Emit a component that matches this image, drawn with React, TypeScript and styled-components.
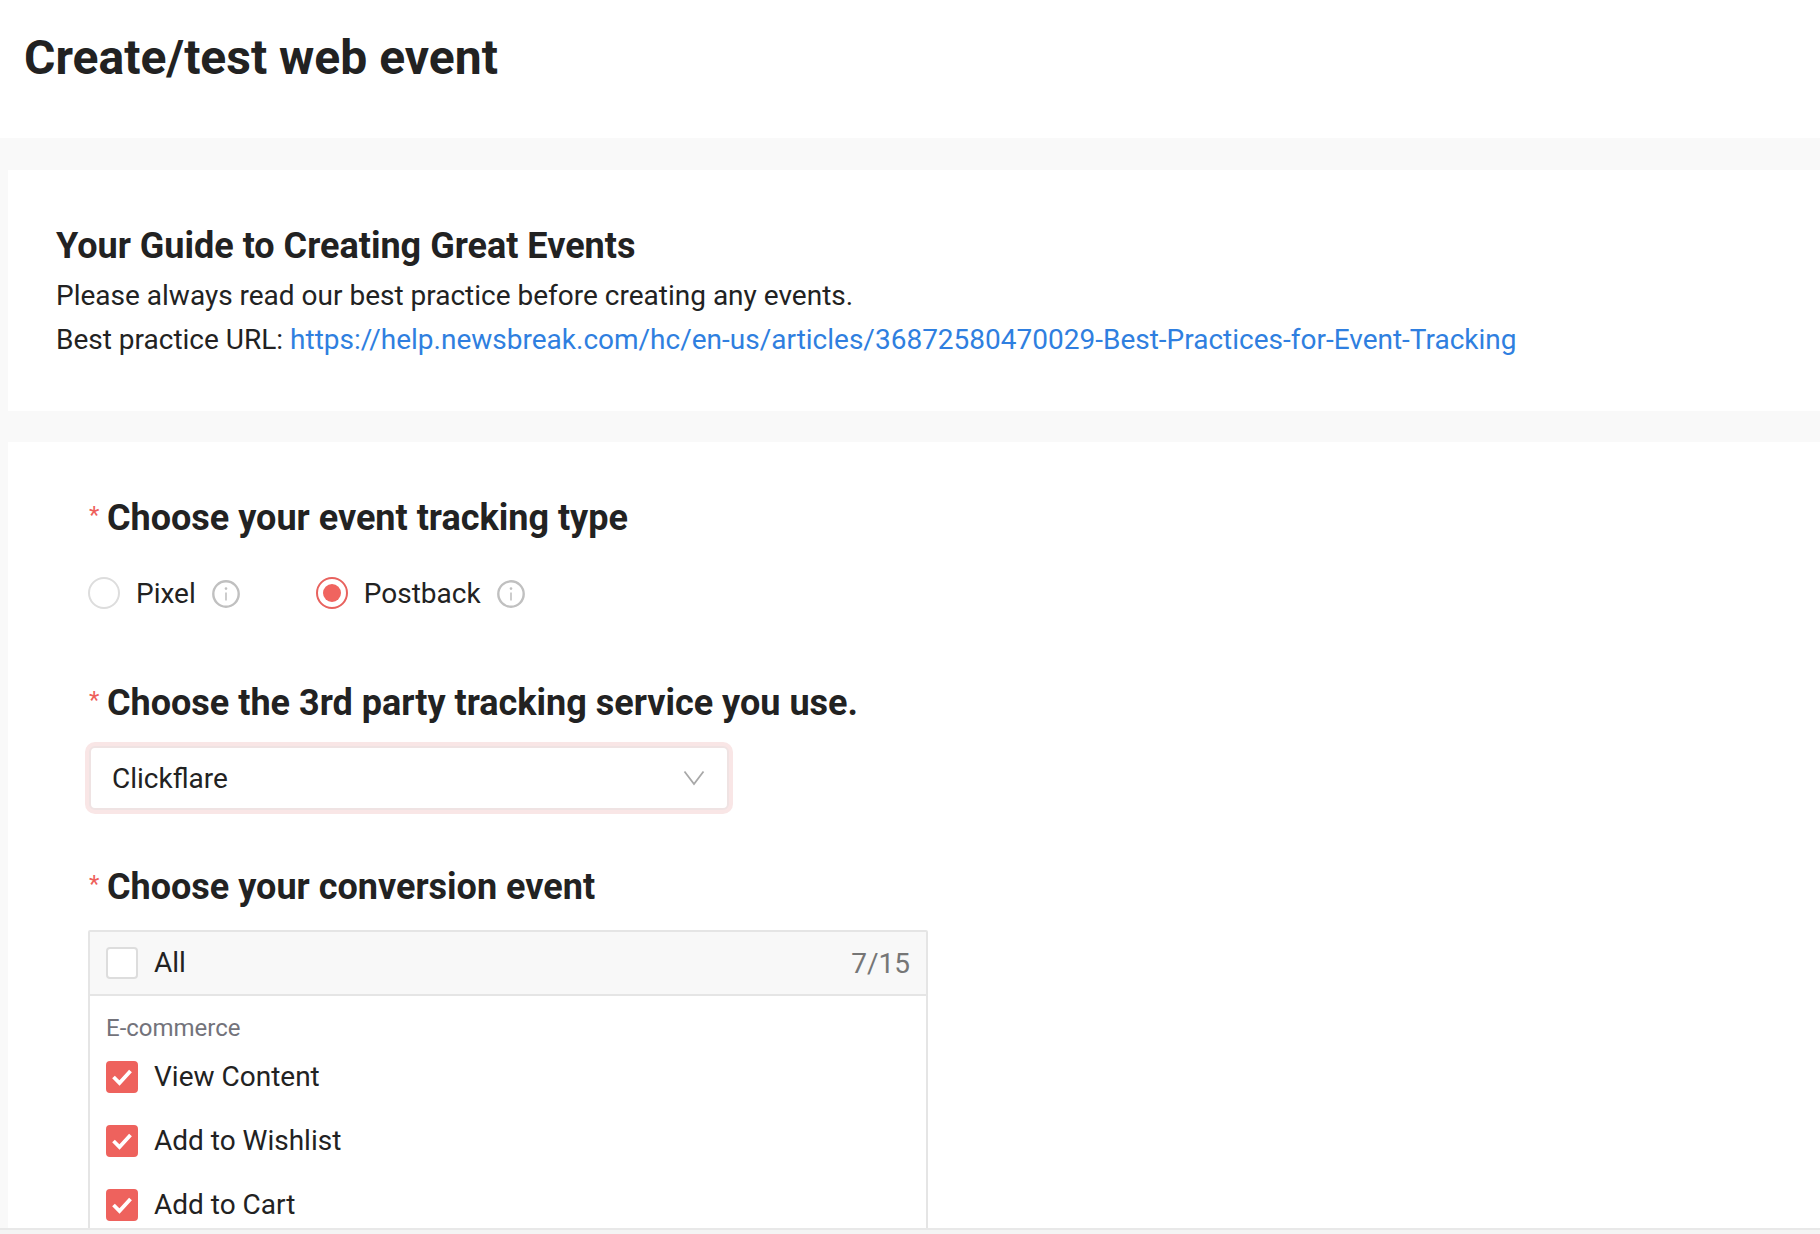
import React from 'react'
import styled, { createGlobalStyle } from 'styled-components'

const GlobalStyle = createGlobalStyle`
  html, body, #root { height: 100%; }
  body {
    margin: 0;
    background: #ffffff;
    color: #222222;
    font-family: Roboto, "Liberation Sans", sans-serif;
    overflow: hidden;
  }
  * { box-sizing: border-box; }
`

const Page = styled.div`
  height: 100vh;
  display: flex;
  flex-direction: column;
  overflow: hidden;
`

const Header = styled.header`
  height: 138px;
  flex: none;
  padding: 29px 0 0 24px;
  background: #ffffff;
`

const PageTitle = styled.h1`
  margin: 0;
  font-size: 48px;
  line-height: 58px;
  font-weight: 700;
  color: #222222;
`

const Content = styled.main`
  flex: 1;
  min-height: 0;
  padding: 32px 0 0 8px;
  background: #f9f9f9;
  display: flex;
  flex-direction: column;
  gap: 31px;
  overflow: hidden;
`

const GuideCard = styled.section`
  flex: none;
  height: 241px;
  padding: 57px 0 0 48px;
  background: #ffffff;
`

const GuideTitle = styled.h2`
  margin: 0 0 9px;
  font-size: 36px;
  line-height: 38px;
  font-weight: 700;
`

const GuideLine = styled.p`
  margin: 0;
  font-size: 28px;
  line-height: 44px;
  color: #222222;
`

const GuideLink = styled.a`
  color: #2f7fe0;
  text-decoration: none;
`

const FormCard = styled.section`
  flex: 1;
  min-height: 0;
  padding: 53px 0 0 80px;
  background: #ffffff;
  overflow: hidden;
`

const Field = styled.div<{ $gap: number; $after: number }>`
  display: flex;
  flex-direction: column;
  gap: ${p => p.$gap}px;
  margin-bottom: ${p => p.$after}px;
`

const Heading = styled.h3`
  position: relative;
  margin: 0;
  padding-left: 19px;
  font-size: 36px;
  line-height: 46px;
  font-weight: 700;
  color: #222222;

  &::before {
    content: '*';
    position: absolute;
    left: 1px;
    top: -3px;
    font-size: 24px;
    font-weight: 400;
    color: #ee5f5b;
  }
`

const RadioRow = styled.div`
  display: flex;
  height: 40px;
  align-items: center;
  gap: 76px;
`

const RadioOption = styled.label`
  display: flex;
  align-items: center;
  font-size: 28px;
`

const RadioMark = styled.span<{ $checked?: boolean }>`
  width: 32px;
  height: 32px;
  margin-right: 16px;
  border-radius: 50%;
  border: 2px solid ${p => (p.$checked ? '#e8625e' : '#dddddd')};
  display: flex;
  align-items: center;
  justify-content: center;

  &::after {
    content: '';
    display: ${p => (p.$checked ? 'block' : 'none')};
    width: 18px;
    height: 18px;
    border-radius: 50%;
    background: #f0645f;
  }
`

const InfoIcon = styled.svg`
  width: 28px;
  height: 28px;
  margin-left: 16px;
  margin-top: 2px;
  color: #c0c0c0;
`

const Select = styled.div`
  width: 640px;
  height: 64px;
  margin-left: 1px;
  padding: 0 22px 0 21px;
  display: flex;
  align-items: center;
  justify-content: space-between;
  font-size: 28px;
  background: #ffffff;
  border: 2px solid #efe3e3;
  border-radius: 6px;
  box-shadow: 0 0 0 4px #f9e6e6;
`

const TransferBox = styled.div`
  width: 840px;
  border: 2px solid #e5e5e5;
  border-radius: 2px;
`

const BoxHeader = styled.div`
  height: 64px;
  padding: 0 16px;
  display: flex;
  align-items: center;
  justify-content: space-between;
  background: #f8f8f8;
  border-bottom: 2px solid #e5e5e5;
`

const CheckRow = styled.label`
  display: flex;
  align-items: center;
  gap: 16px;
  font-size: 28px;
  line-height: 32px;
  color: #222222;
`

const Counter = styled.span`
  font-size: 28px;
  color: #767676;
`

const BoxBody = styled.div`
  padding: 18px 16px;
`

const GroupName = styled.div`
  margin-bottom: 19px;
  font-size: 24px;
  line-height: 28px;
  color: #73737b;
`

const OptionList = styled.div`
  display: flex;
  flex-direction: column;
  gap: 32px;
`

const CheckMark = styled.span<{ $checked?: boolean }>`
  width: 32px;
  height: 32px;
  flex: none;
  display: flex;
  align-items: center;
  justify-content: center;
  border-radius: 4px;
  background: ${p => (p.$checked ? '#ee625d' : '#ffffff')};
  border: 2px solid ${p => (p.$checked ? '#ee625d' : '#dddddd')};
`

const FooterEdge = styled.div`
  height: 6px;
  flex: none;
  background: #f4f4f4;
  border-top: 2px solid #e8e8e8;
`

const Info = () => (
  <InfoIcon viewBox="0 0 28 28" fill="none">
    <circle cx="14" cy="14" r="12.7" stroke="currentColor" strokeWidth="2.4" />
    <circle cx="14" cy="8.6" r="1.3" fill="currentColor" />
    <path d="M14 12.5v8" stroke="currentColor" strokeWidth="1.6" />
  </InfoIcon>
)

const Chevron = () => (
  <svg width="22" height="16" viewBox="0 0 22 16" fill="none">
    <path d="M1.5 1.5L11 14L20.5 1.5" stroke="#a8a8a8" strokeWidth="1.8" />
  </svg>
)

const Tick = () => (
  <svg width="20" height="18" viewBox="0 0 20 18" fill="none">
    <path d="M1.5 9L7.5 15L18.5 3" stroke="#ffffff" strokeWidth="3.8" />
  </svg>
)

const events = ['View Content', 'Add to Wishlist', 'Add to Cart']

export default function App() {
  return (
    <Page>
      <GlobalStyle />
      <Header>
        <PageTitle>Create/test web event</PageTitle>
      </Header>
      <Content>
        <GuideCard>
          <GuideTitle>Your Guide to Creating Great Events</GuideTitle>
          <GuideLine>Please always read our best practice before creating any events.</GuideLine>
          <GuideLine>
            Best practice URL:{' '}
            <GuideLink href="#">
              https://help.newsbreak.com/hc/en-us/articles/36872580470029-Best-Practices-for-Event-Tracking
            </GuideLink>
          </GuideLine>
        </GuideCard>
        <FormCard>
          <Field $gap={32} $after={67}>
            <Heading>Choose your event tracking type</Heading>
            <RadioRow>
              <RadioOption>
                <RadioMark />
                Pixel
                <Info />
              </RadioOption>
              <RadioOption>
                <RadioMark $checked />
                Postback
                <Info />
              </RadioOption>
            </RadioRow>
          </Field>
          <Field $gap={20} $after={54}>
            <Heading>Choose the 3rd party tracking service you use.</Heading>
            <Select>
              Clickflare
              <Chevron />
            </Select>
          </Field>
          <Field $gap={20} $after={0}>
            <Heading>Choose your conversion event</Heading>
            <TransferBox>
              <BoxHeader>
                <CheckRow>
                  <CheckMark />
                  All
                </CheckRow>
                <Counter>7/15</Counter>
              </BoxHeader>
              <BoxBody>
                <GroupName>E-commerce</GroupName>
                <OptionList>
                  {events.map(name => (
                    <CheckRow key={name}>
                      <CheckMark $checked>
                        <Tick />
                      </CheckMark>
                      {name}
                    </CheckRow>
                  ))}
                </OptionList>
              </BoxBody>
            </TransferBox>
          </Field>
        </FormCard>
      </Content>
      <FooterEdge />
    </Page>
  )
}
